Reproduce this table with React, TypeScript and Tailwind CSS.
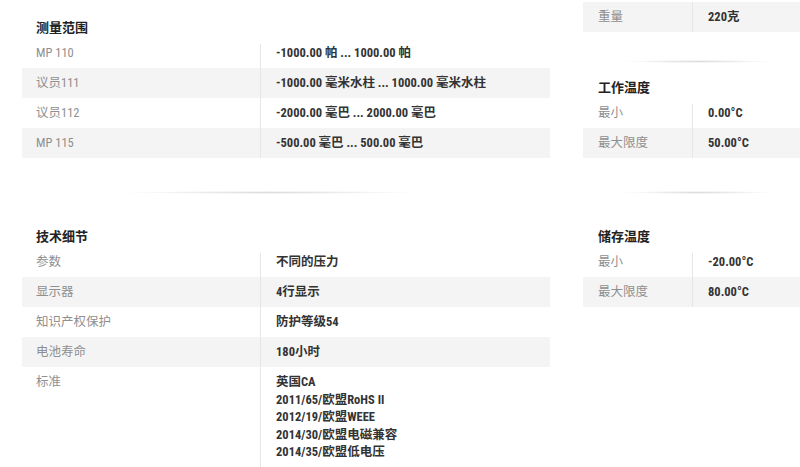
import React from "react";

type Item = { label: string; value: React.ReactNode };

const font = {
  fontFamily:
    '"Liberation Sans Narrow", "Roboto Condensed", "Noto Sans CJK SC", "Liberation Sans", sans-serif',
};

function SpecTable({
  items,
  narrow,
}: {
  items: Item[];
  narrow?: boolean;
}) {
  return (
    <div>
      {items.map((it, i) => (
        <div
          key={i}
          className={`flex min-h-[30px] ${i % 2 === 1 ? "bg-[#f4f4f4]" : ""}`}
        >
          <div
            className={`${narrow ? "w-[109px] pl-[15px]" : "w-[238px] pl-[14px]"} shrink-0 py-[6px] leading-[18px] text-[#8f8f8f]`}
          >
            {it.label}
          </div>
          <div
            className={`flex-1 border-l pl-[15px] py-[6px] leading-[18px] font-bold text-[#333] ${
              i === 0
                ? "border-transparent bg-[linear-gradient(#e6e6e6,#e6e6e6)] bg-no-repeat bg-origin-border bg-[length:1px_100%] bg-[position:0_6px]"
                : "border-[#e6e6e6]"
            }`}
          >
            {it.value}
          </div>
        </div>
      ))}
    </div>
  );
}

function Heading({ children, className = "" }: { children: React.ReactNode; className?: string }) {
  return (
    <h3 className={`text-[13px] leading-[20px] font-bold text-[#222] ${className}`}>
      {children}
    </h3>
  );
}

function Separator({ className = "" }: { className?: string }) {
  return (
    <div
      className={`h-[3px] shrink-0 bg-[radial-gradient(ellipse_at_center,#dcdcdc_0%,rgba(255,255,255,0)_70%)] ${className}`}
    />
  );
}

export default function App() {
  return (
    <div
      className="w-[800px] h-[467px] overflow-hidden bg-white text-[12.5px]"
      style={font}
    >
      {/* top band */}
      <div className="flex items-end">
        <div className="ml-[22px] w-[528px] shrink-0">
          <Heading className="pl-[14px] mt-[18px]">测量范围</Heading>
          <SpecTable
            items={[
              { label: "MP 110", value: "-1000.00 帕 ... 1000.00 帕" },
              { label: "议员111", value: "-1000.00 毫米水柱 ... 1000.00 毫米水柱" },
              { label: "议员112", value: "-2000.00 毫巴 ... 2000.00 毫巴" },
              { label: "MP 115", value: "-500.00 毫巴 ... 500.00 毫巴" },
            ]}
          />
        </div>
        <div className="ml-[33px] w-[240px] shrink-0">
          <div className="flex h-[30px] mt-[2px] bg-[#f4f4f4]">
            <div className="w-[109px] pl-[15px] flex items-center text-[#8f8f8f]">重量</div>
            <div className="flex-1 border-l border-[#e6e6e6] pl-[15px] flex items-center font-bold text-[#333]">
              220克
            </div>
          </div>
          <Separator className="ml-[39px] w-[152px] mt-[28px]" />
          <Heading className="pl-[15px] mt-[15px]">工作温度</Heading>
          <SpecTable
            narrow
            items={[
              { label: "最小", value: "0.00°C" },
              { label: "最大限度", value: "50.00°C" },
            ]}
          />
        </div>
      </div>

      {/* separators */}
      <div className="flex mt-[33px]">
        <Separator className="ml-[122px] w-[296px]" />
        <Separator className="ml-[204px] w-[152px]" />
      </div>

      {/* bottom band */}
      <div className="flex items-start mt-[33px]">
        <div className="ml-[22px] w-[528px] shrink-0">
          <Heading className="pl-[14px]">技术细节</Heading>
          <SpecTable
            items={[
              { label: "参数", value: "不同的压力" },
              { label: "显示器", value: "4行显示" },
              { label: "知识产权保护", value: "防护等级54" },
              { label: "电池寿命", value: "180小时" },
              {
                label: "标准",
                value: (
                  <div className="leading-[17.5px]">
                    <div>英国CA</div>
                    <div>2011/65/欧盟RoHS II</div>
                    <div>2012/19/欧盟WEEE</div>
                    <div>2014/30/欧盟电磁兼容</div>
                    <div>2014/35/欧盟低电压</div>
                  </div>
                ),
              },
            ]}
          />
        </div>
        <div className="ml-[33px] w-[240px] shrink-0">
          <Heading className="pl-[15px]">储存温度</Heading>
          <SpecTable
            narrow
            items={[
              { label: "最小", value: "-20.00°C" },
              { label: "最大限度", value: "80.00°C" },
            ]}
          />
        </div>
      </div>
    </div>
  );
}
